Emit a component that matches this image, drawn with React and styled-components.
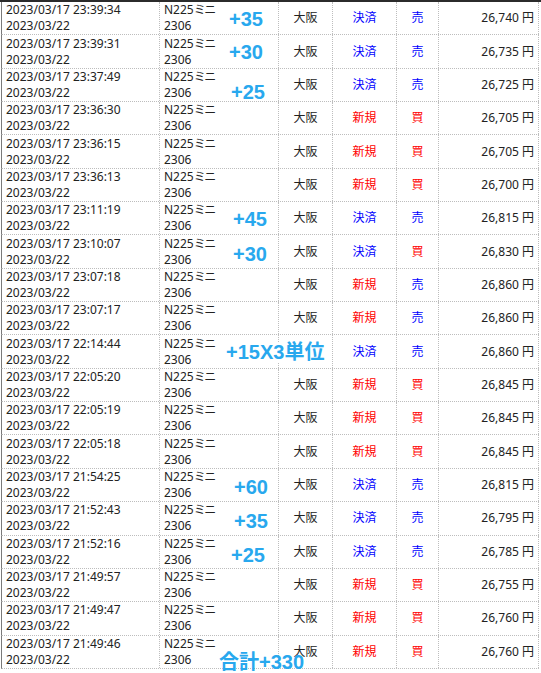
import React from 'react';
import styled, { createGlobalStyle } from 'styled-components';

const GlobalStyle = createGlobalStyle`
  html, body {
    margin: 0;
    padding: 0;
    background: #fff;
  }
  body {
    font-family: "Noto Sans", "Noto Sans CJK JP", sans-serif;
    font-size: 12px;
    color: #222;
  }
`;

const rows = [
  ['23:39:34', '決済', '売', '26,740'],
  ['23:39:31', '決済', '売', '26,735'],
  ['23:37:49', '決済', '売', '26,725'],
  ['23:36:30', '新規', '買', '26,705'],
  ['23:36:15', '新規', '買', '26,705'],
  ['23:36:13', '新規', '買', '26,700'],
  ['23:11:19', '決済', '売', '26,815'],
  ['23:10:07', '決済', '買', '26,830'],
  ['23:07:18', '新規', '売', '26,860'],
  ['23:07:17', '新規', '売', '26,860'],
  ['22:14:44', '決済', '売', '26,860'],
  ['22:05:20', '新規', '買', '26,845'],
  ['22:05:19', '新規', '買', '26,845'],
  ['22:05:18', '新規', '買', '26,845'],
  ['21:54:25', '決済', '売', '26,815'],
  ['21:52:43', '決済', '売', '26,795'],
  ['21:52:16', '決済', '売', '26,785'],
  ['21:49:57', '新規', '買', '26,755'],
  ['21:49:47', '新規', '買', '26,760'],
  ['21:49:46', '新規', '買', '26,760'],
];

// hand-written profit notes laid over the table
const notes = [
  { text: '+35', x: 229, y: 9 },
  { text: '+30', x: 229, y: 42 },
  { text: '+25', x: 231, y: 82 },
  { text: '+45', x: 233, y: 209 },
  { text: '+30', x: 233, y: 244 },
  { text: '+15X3単位', x: 226, y: 342, cover: true },
  { text: '+60', x: 234, y: 477 },
  { text: '+35', x: 234, y: 511 },
  { text: '+25', x: 231, y: 545 },
  { text: '合計+330', x: 219, y: 652 },
];

const colorOf = (w) => {
  if (w === '決済' || w === '売') return '#0000ff';
  if (w === '新規' || w === '買') return '#ff0000';
  return '#222';
};

function App() {
  return (
    <Page>
      <GlobalStyle />
      <TopBar />
      <List>
        {rows.map(([time, kind, side, price], i) => (
          <Row key={i}>
            <Cell>
              <span>2023/03/17 {time}</span>
              <span>2023/03/22</span>
            </Cell>
            <Cell>
              <span>N225<Kana>ミニ</Kana></span>
              <span>2306</span>
            </Cell>
            <Cell $align="center">大阪</Cell>
            <Cell $align="center" $color={colorOf(kind)}>{kind}</Cell>
            <Cell $align="center" $color={colorOf(side)}>{side}</Cell>
            <Cell $align="flex-end">{price} 円</Cell>
          </Row>
        ))}
      </List>
      {notes.map((n, i) => (
        <Note key={i} $cover={n.cover} style={{ left: n.x, top: n.y }}>
          {n.text}
        </Note>
      ))}
    </Page>
  );
}

export default App;

const Page = styled.div`
  position: relative;
  width: 541px;
  height: 673px;
  overflow: hidden;
`;

const TopBar = styled.div`
  height: 2px;
  background: #2b2b2b;
`;

const List = styled.div`
  display: flex;
  flex-direction: column;
  padding-left: 1px;
`;

const Row = styled.div`
  display: grid;
  grid-template-columns: 158px 119px 54px 64px 42px 100px;
  width: 538px;
  height: 33.35px;
  box-sizing: border-box;
  border-left: 1px solid #7a7a7a;
  border-bottom: 1px dotted #bdbdbd;
`;

const Cell = styled.div`
  display: flex;
  flex-direction: column;
  justify-content: center;
  align-items: ${(p) => p.$align || 'flex-start'};
  box-sizing: border-box;
  padding: 0 4px;
  border-right: 1px dotted #bdbdbd;
  line-height: 16px;
  color: ${(p) => p.$color || '#222'};
  white-space: nowrap;
`;

const Kana = styled.span`
  letter-spacing: -1.5px;
`;

const Note = styled.div`
  position: absolute;
  font-family: "Liberation Sans", "Noto Sans CJK JP", sans-serif;
  font-weight: bold;
  font-size: 20px;
  line-height: 20px;
  color: #28a8ee;
  padding: 0 1px;
  margin-left: -1px;
  background: ${(p) => (p.$cover ? '#fff' : 'transparent')};
  white-space: nowrap;
`;
